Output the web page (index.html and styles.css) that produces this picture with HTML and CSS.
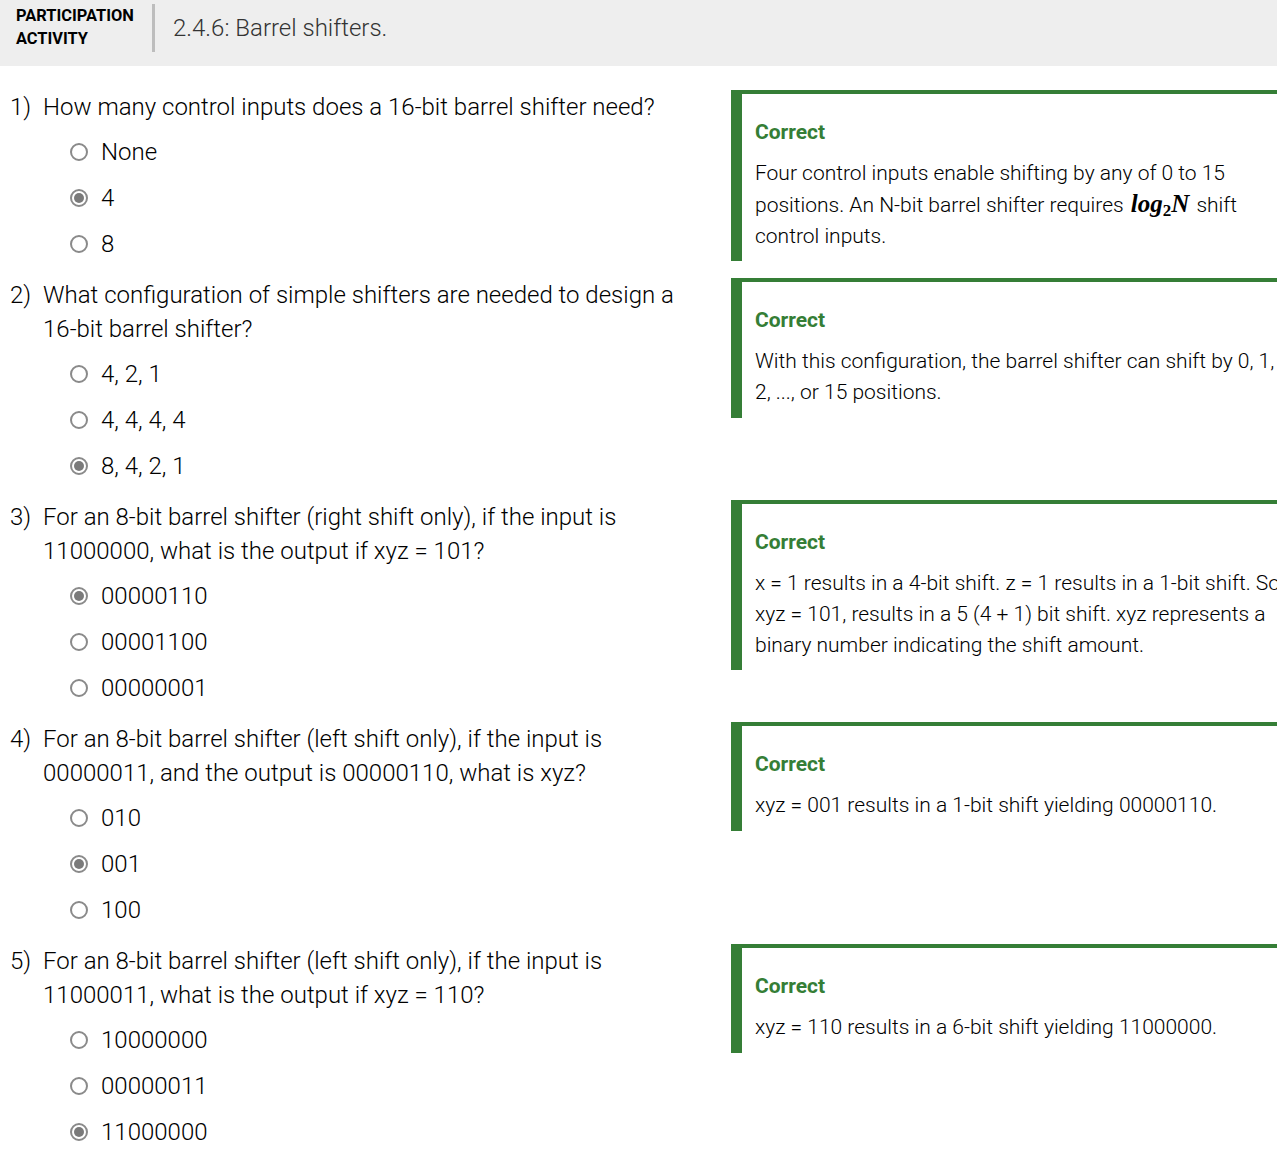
FILE: index.html
```html
<!DOCTYPE html>
<html lang="en">
<head>
<meta charset="utf-8">
<title>2.4.6: Barrel shifters.</title>
<link rel="stylesheet" href="styles.css">
</head>
<body>
<header class="activity-header">
  <div class="activity-label">PARTICIPATION<br>ACTIVITY</div>
  <div class="divider"></div>
  <h1 class="activity-title">2.4.6: Barrel shifters.</h1>
</header>

<main class="questions">
  <section class="question-row">
    <div class="question">
      <div class="q-text"><span class="q-num">1)</span><span class="q-body">How many control inputs does a 16-bit barrel shifter need?</span></div>
      <ul class="options">
        <li class="option"><span class="radio"></span>None</li>
        <li class="option"><span class="radio checked"></span>4</li>
        <li class="option"><span class="radio"></span>8</li>
      </ul>
    </div>
    <div class="feedback">
      <div class="fb-title">Correct</div>
      <div class="fb-text">Four control inputs enable shifting by any of 0 to 15 positions. An N-bit barrel shifter requires <span class="math">log<sub>2</sub>N</span> shift control inputs.</div>
    </div>
  </section>

  <section class="question-row">
    <div class="question">
      <div class="q-text"><span class="q-num">2)</span><span class="q-body">What configuration of simple shifters are needed to design a 16-bit barrel shifter?</span></div>
      <ul class="options">
        <li class="option"><span class="radio"></span>4, 2, 1</li>
        <li class="option"><span class="radio"></span>4, 4, 4, 4</li>
        <li class="option"><span class="radio checked"></span>8, 4, 2, 1</li>
      </ul>
    </div>
    <div class="feedback">
      <div class="fb-title">Correct</div>
      <div class="fb-text">With this configuration, the barrel shifter can shift by 0, 1, 2, ..., or 15 positions.</div>
    </div>
  </section>

  <section class="question-row">
    <div class="question">
      <div class="q-text"><span class="q-num">3)</span><span class="q-body">For an 8-bit barrel shifter (right shift only), if the input is 11000000, what is the output if xyz = 101?</span></div>
      <ul class="options">
        <li class="option"><span class="radio checked"></span>00000110</li>
        <li class="option"><span class="radio"></span>00001100</li>
        <li class="option"><span class="radio"></span>00000001</li>
      </ul>
    </div>
    <div class="feedback">
      <div class="fb-title">Correct</div>
      <div class="fb-text">x = 1 results in a 4-bit shift. z = 1 results in a 1-bit shift. So xyz = 101, results in a 5 (4 + 1) bit shift. xyz represents a binary number indicating the shift amount.</div>
    </div>
  </section>

  <section class="question-row">
    <div class="question">
      <div class="q-text"><span class="q-num">4)</span><span class="q-body">For an 8-bit barrel shifter (left shift only), if the input is 00000011, and the output is 00000110, what is xyz?</span></div>
      <ul class="options">
        <li class="option"><span class="radio"></span>010</li>
        <li class="option"><span class="radio checked"></span>001</li>
        <li class="option"><span class="radio"></span>100</li>
      </ul>
    </div>
    <div class="feedback">
      <div class="fb-title">Correct</div>
      <div class="fb-text">xyz = 001 results in a 1-bit shift yielding 00000110.</div>
    </div>
  </section>

  <section class="question-row">
    <div class="question">
      <div class="q-text"><span class="q-num">5)</span><span class="q-body">For an 8-bit barrel shifter (left shift only), if the input is 11000011, what is the output if xyz = 110?</span></div>
      <ul class="options">
        <li class="option"><span class="radio"></span>10000000</li>
        <li class="option"><span class="radio"></span>00000011</li>
        <li class="option"><span class="radio checked"></span>11000000</li>
      </ul>
    </div>
    <div class="feedback">
      <div class="fb-title">Correct</div>
      <div class="fb-text">xyz = 110 results in a 6-bit shift yielding 11000000.</div>
    </div>
  </section>
</main>
</body>
</html>
```

FILE: styles.css
```css
html, body {
  overflow-x: hidden;
}
body {
  margin: 0;
  font-family: Roboto, "Liberation Sans", Arial, sans-serif;
  color: #000;
  background: #fff;
}

.activity-header {
  display: flex;
  align-items: flex-start;
  height: 66px;
  background: #eeeeee;
  box-sizing: border-box;
  padding: 4px 0 0 16px;
}
.activity-label {
  font-size: 16.4px;
  font-weight: 700;
  line-height: 23px;
  color: #000;
  width: 136px;
}
.divider {
  width: 3px;
  height: 48px;
  background: #bdbdbd;
}
.activity-title {
  margin: 0 0 0 18px;
  font-size: 24px;
  font-weight: 300;
  line-height: 48px;
  color: #333;
}

.questions {
  padding-top: 24px;
}
.question-row {
  display: grid;
  grid-template-columns: 731px 580px;
  align-items: start;
  margin-bottom: 11px;
}
.question {
  padding-left: 10px;
  padding-right: 40px;
}
.q-text {
  display: flex;
  font-size: 24px;
  font-weight: 300;
  line-height: 34px;
}
.q-num {
  width: 33px;
  flex: none;
}
.options {
  list-style: none;
  margin: 5px 0 0 0;
  padding: 0 0 0 60px;
}
.option {
  display: flex;
  align-items: center;
  height: 46px;
  font-size: 24px;
  font-weight: 300;
}
.radio {
  box-sizing: border-box;
  width: 18px;
  height: 18px;
  border: 2px solid #8a8a8a;
  border-radius: 50%;
  margin-right: 13px;
  position: relative;
  flex: none;
}
.radio.checked::after {
  content: "";
  position: absolute;
  left: 2px;
  top: 2px;
  width: 10px;
  height: 10px;
  border-radius: 50%;
  background: #7a7a7a;
}

.feedback {
  border-top: 4px solid #357e36;
  border-left: 11px solid #357e36;
  padding: 24px 16px 10px 13px;
}
.fb-title {
  font-size: 21px;
  font-weight: 700;
  color: #357e36;
  line-height: 28px;
}
.fb-text {
  margin-top: 12px;
  font-size: 21px;
  font-weight: 300;
  line-height: 30.8px;
  color: #000;
}
.math {
  font-family: "Liberation Serif", "DejaVu Serif", serif;
  font-style: italic;
  font-size: 25px;
  font-weight: 700;
  margin: 0 2px;
}
.math sub {
  font-style: normal;
  font-size: 17px;
  vertical-align: -4px;
  line-height: 0;
}
```
